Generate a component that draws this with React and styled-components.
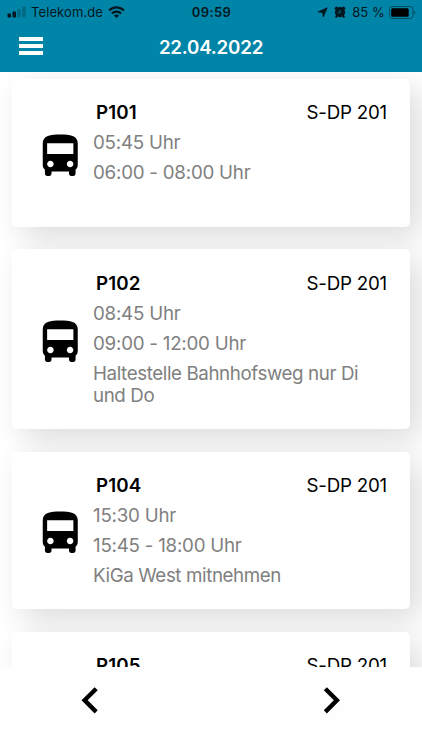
import styled, { createGlobalStyle } from "styled-components";
import {
  MdChevronLeft,
  MdChevronRight,
  MdDirectionsBus,
} from "react-icons/md";

const GlobalStyle = createGlobalStyle`
  * {
    box-sizing: border-box;
  }

  body {
    margin: 0;
    background-color: #fff;
    font-family: Inter, "Liberation Sans", sans-serif;
  }
`;

const Screen = styled.div`
  display: flex;
  flex-direction: column;
  width: 422px;
  height: 750px;
  overflow: hidden;
`;

const Header = styled.header`
  flex: none;
  height: 72px;
  background-color: #0085a8;
`;

const StatusBar = styled.div`
  display: grid;
  grid-template-columns: 1fr auto 1fr;
  align-items: center;
  height: 24px;
  padding: 0 6px 0 7px;
  color: #04171e;
  font-size: 13px;
  line-height: 16px;
`;

const StatusGroup = styled.div`
  display: flex;
  align-items: center;
  justify-content: ${({ $end }) => ($end ? "flex-end" : "flex-start")};
`;

const Carrier = styled.span`
  margin: 0 5px 0 5px;
  letter-spacing: 0.1px;
`;

const Clock = styled.span`
  font-weight: 600;
  letter-spacing: 0.4px;
`;

const Battery = styled.span`
  margin: 0 4px 0 6px;
  letter-spacing: 0.1px;
`;

const NavBar = styled.div`
  display: grid;
  grid-template-columns: 1fr auto 1fr;
  align-items: center;
  height: 48px;
  padding: 0 19px;
`;

const MenuButton = styled.button`
  display: flex;
  flex-direction: column;
  gap: 3px;
  width: 24px;
  margin-bottom: 5px;
  padding: 0;
  border: none;
  background: none;
`;

const MenuLine = styled.span`
  width: 24px;
  height: 4px;
  background-color: #fff;
`;

const Title = styled.h1`
  margin: 0;
  color: #fff;
  font-size: 18.75px;
  font-weight: 600;
  letter-spacing: -0.22px;
  line-height: 24px;
`;

const List = styled.main`
  display: flex;
  flex: 1;
  flex-direction: column;
  gap: 22.5px;
  min-height: 0;
  padding: 6.5px 12px 0;
  overflow: hidden;
`;

const Card = styled.article`
  display: flex;
  flex: none;
  align-items: center;
  padding: 23.5px 23px 21.5px 21.5px;
  border-radius: 5px;
  background-color: #fff;
  box-shadow: 10px 10px 30px rgba(0, 0, 0, 0.14);
`;

const BusIcon = styled(MdDirectionsBus)`
  flex: none;
  width: 52.5px;
  height: 52.5px;
  margin: 4.5px 7px 0 0;
  color: #000;
`;

const Details = styled.div`
  display: flex;
  flex: 1;
  flex-direction: column;
  gap: 7.5px;
  font-size: 18.75px;
  line-height: 22.5px;
`;

const CardHead = styled.div`
  display: flex;
  justify-content: space-between;
  padding-left: 3px;
  color: #000;
`;

const Tour = styled.span`
  font-weight: 600;
  letter-spacing: 0.1px;
`;

const Plate = styled.span`
  letter-spacing: -0.22px;
`;

const Line = styled.div`
  min-height: 22.5px;
  color: #808080;
  letter-spacing: -0.24px;
`;

const Note = styled(Line)`
  min-height: 13px;
  letter-spacing: -0.4px;
`;

const Footer = styled.footer`
  display: flex;
  flex: none;
  align-items: center;
  justify-content: space-between;
  height: 83px;
  padding: 0 65px 16px 64px;
  background-color: #fefefe;
`;

const PageButton = styled.button`
  display: flex;
  padding: 0;
  border: none;
  background: none;
  color: #000;
  font-size: 52.5px;
`;

const tours = [
  { id: "P101", plate: "S-DP 201", start: "05:45 Uhr", time: "06:00 - 08:00 Uhr", note: "" },
  {
    id: "P102",
    plate: "S-DP 201",
    start: "08:45 Uhr",
    time: "09:00 - 12:00 Uhr",
    note: "Haltestelle Bahnhofsweg nur Di und Do",
  },
  {
    id: "P104",
    plate: "S-DP 201",
    start: "15:30 Uhr",
    time: "15:45 - 18:00 Uhr",
    note: "KiGa West mitnehmen",
  },
  { id: "P105", plate: "S-DP 201", start: "", time: "", note: "" },
];

const SignalIcon = () => (
  <svg width="19" height="12" viewBox="0 0 19 12" fill="#04171e">
    <rect x="0.5" y="7.5" width="3.5" height="4" rx="0.8" />
    <rect x="5.5" y="5.5" width="3.5" height="6" rx="0.8" />
    <rect x="10.3" y="3" width="3.5" height="8.5" rx="0.8" opacity="0.25" />
    <rect x="15.2" y="0.5" width="3.5" height="11" rx="0.8" opacity="0.25" />
  </svg>
);

const WifiIcon = () => (
  <svg width="17" height="12" viewBox="0 0 17 12" fill="none" stroke="#04171e" strokeWidth="2.2">
    <path d="M1 4.5C5.2 0.4 11.8 0.4 16 4.5" />
    <path d="M3.8 7.5C6.4 5 10.6 5 13.2 7.5" />
    <path d="M8.5 12L5.9 9.5C7.4 8.2 9.6 8.2 11.1 9.5Z" fill="#04171e" stroke="none" />
  </svg>
);

const LocationIcon = () => (
  <svg width="11" height="11" viewBox="0 0 11 11" fill="#04171e">
    <path
      d="M10.2 0.8L6.3 9.9L5.6 5.4L1 4.9Z"
      stroke="#04171e"
      strokeWidth="0.8"
      strokeLinejoin="round"
    />
  </svg>
);

const AlarmClock = styled.svg`
  margin-left: 6px;
`;

const AlarmIcon = () => (
  <AlarmClock width="12" height="12" viewBox="0 0 12 12">
    <circle cx="6" cy="6.2" r="5.1" fill="#04171e" />
    <path
      d="M1.4 2.4L2.6 1.4M10.6 2.4L9.4 1.4M2.8 10L2.2 10.9M9.2 10L9.8 10.9"
      stroke="#04171e"
      strokeWidth="1.9"
      strokeLinecap="round"
    />
    <path d="M6 4V6.7H3.8" fill="none" stroke="#0085a8" strokeWidth="0.8" />
  </AlarmClock>
);

const BatteryIcon = () => (
  <svg width="27" height="13" viewBox="0 0 27 13">
    <rect x="0.5" y="0.5" width="23.5" height="12" rx="3" fill="none" stroke="#04171e" opacity="0.5" />
    <rect x="2.2" y="2.2" width="17.5" height="8.6" rx="1.5" fill="#000" />
    <path d="M25.2 4.5C26.6 5 26.6 8 25.2 8.5Z" fill="#04171e" opacity="0.6" />
  </svg>
);

const App = () => {
  return (
    <>
      <GlobalStyle />
      <Screen>
        <Header>
          <StatusBar>
            <StatusGroup>
              <SignalIcon />
              <Carrier>Telekom.de</Carrier>
              <WifiIcon />
            </StatusGroup>
            <Clock>09:59</Clock>
            <StatusGroup $end>
              <LocationIcon />
              <AlarmIcon />
              <Battery>85 %</Battery>
              <BatteryIcon />
            </StatusGroup>
          </StatusBar>
          <NavBar>
            <MenuButton aria-label="Menü">
              <MenuLine />
              <MenuLine />
              <MenuLine />
            </MenuButton>
            <Title>22.04.2022</Title>
          </NavBar>
        </Header>
        <List>
          {tours.map((tour) => (
            <Card key={tour.id}>
              <BusIcon />
              <Details>
                <CardHead>
                  <Tour>{tour.id}</Tour>
                  <Plate>{tour.plate}</Plate>
                </CardHead>
                <Line>{tour.start}</Line>
                <Line>{tour.time}</Line>
                <Note>{tour.note}</Note>
              </Details>
            </Card>
          ))}
        </List>
        <Footer>
          <PageButton aria-label="Zurück">
            <MdChevronLeft />
          </PageButton>
          <PageButton aria-label="Weiter">
            <MdChevronRight />
          </PageButton>
        </Footer>
      </Screen>
    </>
  );
};

export default App;
